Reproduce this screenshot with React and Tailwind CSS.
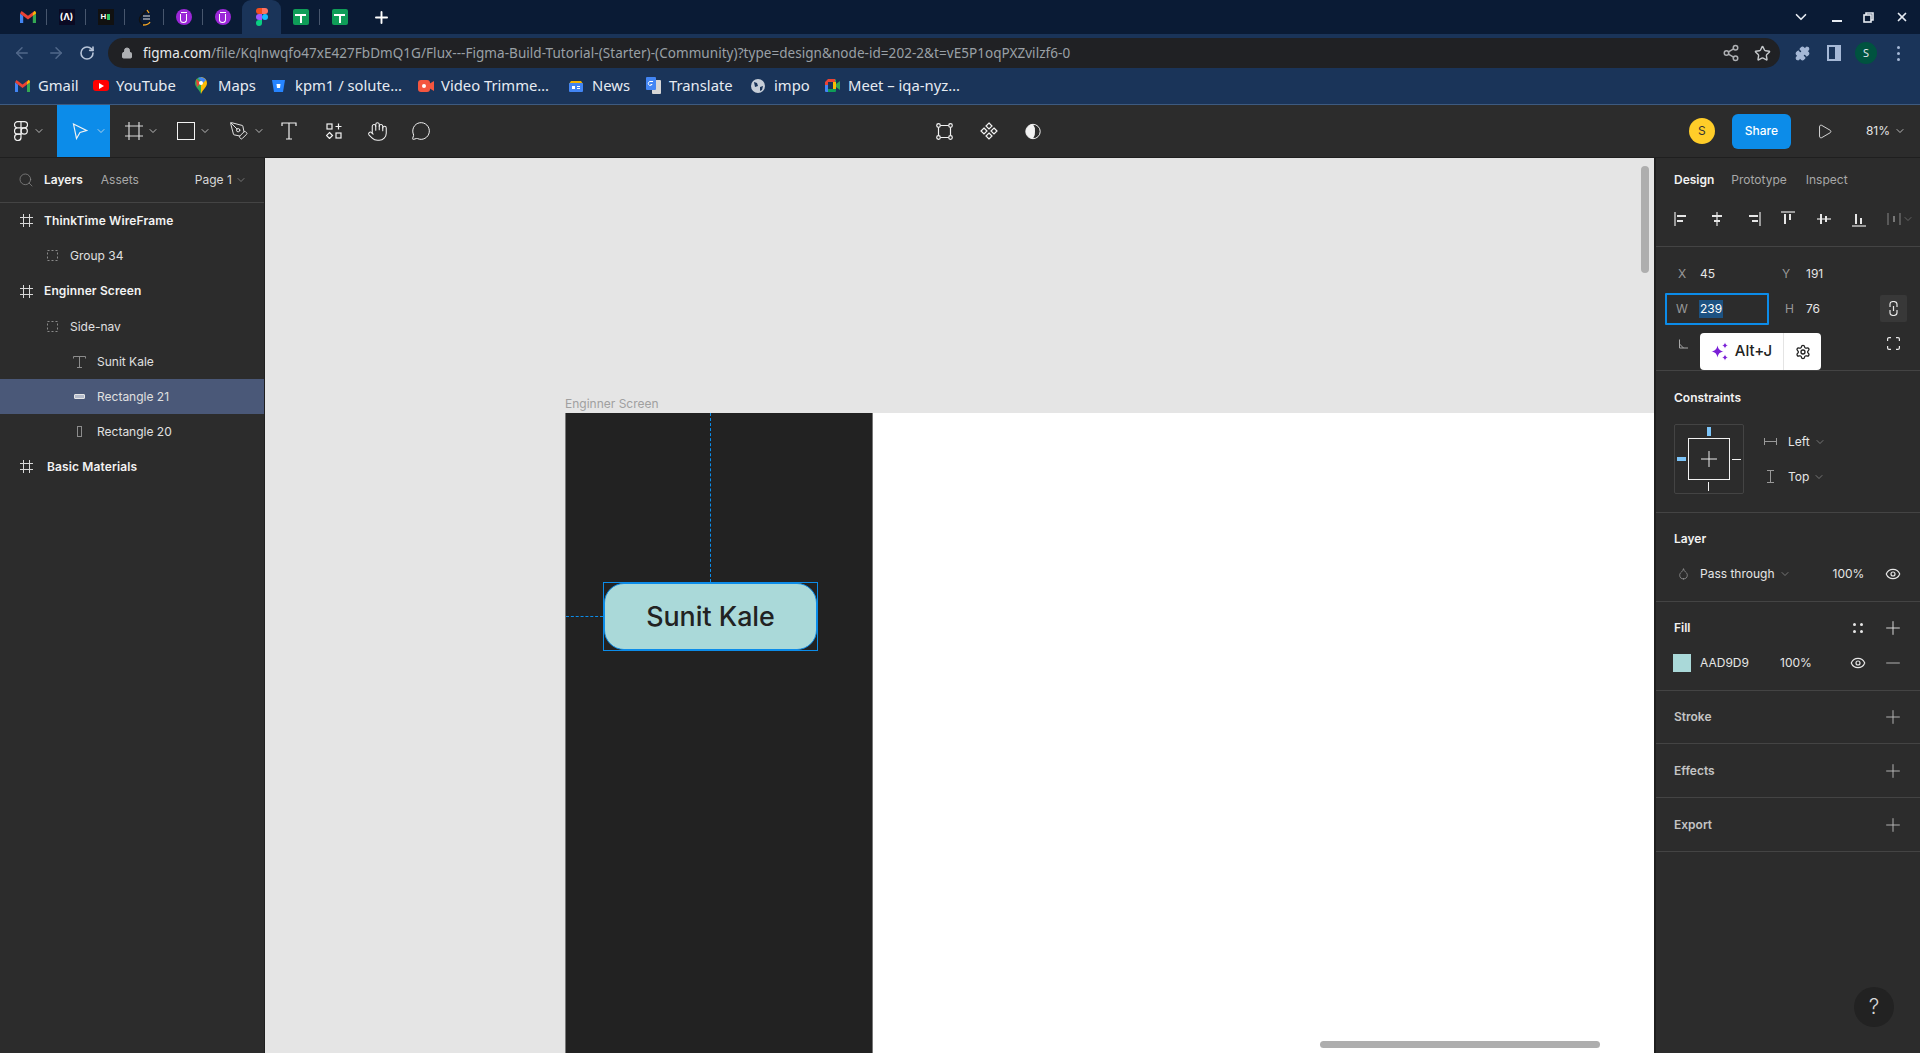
import {
  ArrowLeft,
  ArrowRight,
  RotateCw,
  Lock,
  Share2,
  Star,
  Puzzle,
  ChevronDown,
  Search,
  Eye,
  Plus,
  Minus,
  Hand,
  MessageCircle,
  PenTool,
  Settings,
  X,
  Play,
  Droplet,
} from "lucide-react";

const ui = "font-['Inter',sans-serif]";
const chrome = "font-['Noto_Sans',sans-serif]";

function Gmail({ size = 16 }) {
  return (
    <svg width={size} height={size * 0.8} viewBox="0 0 20 16">
      <path d="M0 3v13h4V6z" fill="#4285f4" />
      <path d="M20 3v13h-4V6z" fill="#34a853" />
      <path d="M0 3l10 7.5L20 3l-2-3-8 6-8-6z" fill="#ea4335" />
      <path d="M16 3l2-3c1 0 2 1 2 3l-4 3z" fill="#fbbc04" />
    </svg>
  );
}

function SheetIcon() {
  return (
    <div className="w-4 h-4 rounded-[2px] bg-[#0f9d58] flex flex-col items-center pt-[5px]">
      <div className="w-[11px] h-[2px] bg-white" />
      <div className="w-[2px] h-[7px] bg-white" />
    </div>
  );
}

function UIcon() {
  return (
    <div className="w-4 h-4 rounded-full bg-[#9b27d8] flex flex-col items-center justify-center">
      <div className="w-[6px] h-px bg-white" />
      <div className="w-[7px] h-[9px] border-x-[1.5px] border-b-[1.5px] border-white rounded-b-full mt-px" />
    </div>
  );
}

function FigmaColor() {
  return (
    <svg width="12" height="18" viewBox="0 0 12 18">
      <path d="M6 0H3a3 3 0 0 0 0 6h3z" fill="#f24e1e" />
      <path d="M6 0h3a3 3 0 0 1 0 6H6z" fill="#ff7262" />
      <path d="M6 6H3a3 3 0 0 0 0 6h3z" fill="#a259ff" />
      <circle cx="9" cy="9" r="3" fill="#1abcfe" />
      <path d="M3 12h3v3a3 3 0 1 1-3-3z" fill="#0acf83" />
    </svg>
  );
}

const tabIcons = [
  <Gmail key="g" />,
  <div key="a" className={`w-4 h-4 bg-[#0a0a23] text-white text-[9px] leading-4 text-center font-bold ${ui}`}>(Λ)</div>,
  <div key="h" className="w-4 h-4 bg-[#111] flex items-center justify-center gap-px">
    <span className="text-white text-[8px] leading-none font-bold font-['Liberation_Sans',sans-serif]">H</span>
    <div className="w-[3px] h-[6px] bg-[#2ec866]" />
  </div>,
  <svg key="s" width="14" height="17" viewBox="0 0 14 17" fill="none">
    <path d="M9 1L3 7c-2 2-2 5 0 7l2 2" stroke="#111" strokeWidth="1.5" />
    <path d="M5 7h7M5 10h7" stroke="#e8e8e8" strokeWidth="1.2" />
    <path d="M9 1l2 3M5 16c3 0 6-1 7-3" stroke="#f5a623" strokeWidth="1.3" />
  </svg>,
  <UIcon key="u1" />,
  <UIcon key="u2" />,
  <FigmaColor key="f" />,
  <SheetIcon key="s1" />,
  <SheetIcon key="s2" />,
];

const bookmarks = [
  { name: "Gmail", w: "w-[78px]", icon: <Gmail size={15} /> },
  {
    name: "YouTube",
    w: "w-[102px]",
    icon: (
      <div className="w-4 h-[11px] rounded-[3px] bg-[#f00] flex items-center justify-center">
        <div className="w-0 h-0 border-y-[3px] border-y-transparent border-l-[5px] border-l-white" />
      </div>
    ),
  },
  {
    name: "Maps",
    w: "w-[77px]",
    icon: (
      <svg width="12" height="17" viewBox="0 0 12 17">
        <path d="M6 0a6 6 0 0 0-6 6c0 4 4 6 6 11z" fill="#34a853" />
        <path d="M6 0a6 6 0 0 1 6 6c0 4-4 6-6 11z" fill="#fbbc04" />
        <path d="M1 2l5 4-4 4z" fill="#ea4335" />
        <path d="M3 1a6 6 0 0 1 8 2L8 6z" fill="#4285f4" />
        <circle cx="6" cy="6" r="2" fill="#fff" />
      </svg>
    ),
  },
  {
    name: "kpm1 / solute…",
    w: "w-[146px]",
    icon: (
      <svg width="13" height="13" viewBox="0 0 13 13">
        <path d="M0 1h13l-2 12H2z" fill="#2684ff" />
        <path d="M4.500 5h4L8 9H5z" fill="#fff" />
      </svg>
    ),
  },
  {
    name: "Video Trimme…",
    w: "w-[151px]",
    icon: (
      <svg width="16" height="12" viewBox="0 0 16 12">
        <rect width="12" height="12" rx="3" fill="#f4563f" />
        <path d="M11 4l5-3v10l-5-3z" fill="#f4563f" />
        <circle cx="6" cy="6" r="2" fill="#fff" />
      </svg>
    ),
  },
  {
    name: "News",
    w: "w-[77px]",
    icon: (
      <svg width="14" height="14" viewBox="0 0 14 14">
        <path d="M2 2h10l2 3H0z" fill="#f4b400" />
        <rect y="4" width="14" height="9" rx="1" fill="#4285f4" />
        <rect x="3" y="7" width="3" height="3" fill="#fff" />
        <rect x="8" y="7" width="3" height="1" fill="#fff" />
        <rect x="8" y="9" width="3" height="1" fill="#fff" />
      </svg>
    ),
  },
  {
    name: "Translate",
    w: "w-[105px]",
    icon: (
      <svg width="15" height="17" viewBox="0 0 15 17">
        <rect x="6" y="3" width="9" height="14" rx="1" fill="#d6d6d6" />
        <rect width="10" height="13" rx="1" fill="#4285f4" />
        <path d="M7 4.500H4a2 2 0 1 0 2 3H4.500" stroke="#fff" fill="none" />
      </svg>
    ),
  },
  {
    name: "impo",
    w: "w-[74px]",
    icon: (
      <svg width="14" height="14" viewBox="0 0 14 14">
        <circle cx="7" cy="7" r="7" fill="#c7ced8" />
        <path d="M3 3l3 1 1 3-3 1zM9 8l3-1-1 4-2 1z" fill="#1a3459" />
      </svg>
    ),
  },
  {
    name: "Meet – iqa-nyz…",
    w: "w-[135px]",
    icon: (
      <svg width="15" height="13" viewBox="0 0 15 13">
        <path d="M3 0h7v3H3v3H0V3z" fill="#ea4335" />
        <path d="M10 0l1 1v4l4-3v9l-4-3-3-2 2-3z" fill="#34a853" />
        <path d="M0 6h3v7H1a1 1 0 0 1-1-1z" fill="#4285f4" />
        <path d="M3 10h8v2a1 1 0 0 1-1 1H3z" fill="#0f9d58" />
        <rect x="8" y="3" width="3" height="7" fill="#fbbc04" />
      </svg>
    ),
  },
];

function ChromeBar() {
  return (
    <div className={`${chrome} shrink-0`}>
      <div className="h-[34px] bg-[#0a1b35] flex items-center pl-2 text-[#e6ebf2]">
        {tabIcons.map((icon, i) => (
          <div key={i} className="flex items-center">
            <div className={`w-[39px] h-[34px] flex items-center justify-center ${i === 6 ? "bg-[#1a3459] rounded-t-[9px]" : ""}`}>{icon}</div>
            {i !== 5 && i !== 6 && i !== 8 ? <div className="w-px h-[16px] bg-[#47566d] -ml-px" /> : null}
          </div>
        ))}
        <Plus size={19} strokeWidth={2.4} color="#fff" className="ml-[13px]" />
        <div className="flex-1" />
        <ChevronDown size={18} strokeWidth={2.2} color="#e6ebf2" className="mr-[22px]" />
        <div className="w-[10px] h-[2px] bg-[#e6ebf2] mt-[8px] mr-[21px]" />
        <svg width="11" height="11" viewBox="0 0 11 11" fill="none" stroke="#e6ebf2" strokeWidth="1.6" className="mr-[21px]">
          <path d="M3 3V1h7v7H8" />
          <rect x="1" y="3" width="7" height="7" />
        </svg>
        <X size={14} strokeWidth={3} color="#e6ebf2" className="mr-[11px]" />
      </div>
      <div className="h-[35px] pt-[3px] bg-[#1a3459] flex items-center">
        <div className="w-[108px] flex items-center pl-[13px] gap-[16px]">
          <ArrowLeft size={18} color="#51688a" />
          <ArrowRight size={18} color="#51688a" />
          <RotateCw size={16} color="#b7c4d8" strokeWidth={2.4} className="ml-[-2px]" />
        </div>
        <div className="w-[1672px] h-[30px] rounded-full bg-[#202124] flex items-center pl-[13px]">
          <Lock size={12} color="#aeb0b3" fill="#aeb0b3" />
          <div className="ml-[10px] text-[13.5px] tracking-[0.05px] text-[#9aa0a6] whitespace-nowrap">
            <span className="text-[#e8eaed]">figma.com</span>/file/Kqlnwqfo47xE427FbDmQ1G/Flux---Figma-Build-Tutorial-(Starter)-(Community)?type=design&amp;node-id=202-2&amp;t=vE5P1oqPXZvilzf6-0
          </div>
          <div className="flex-1" />
          <Share2 size={18} color="#aeb0b3" className="mr-[14px]" />
          <Star size={17} color="#c4c7ca" className="mr-[9px]" strokeWidth={2} />
        </div>
        <Puzzle size={15} color="#a5b8d6" fill="#a5b8d6" className="ml-[15px]" />
        <div className="ml-[17px] w-[14px] h-[16px] bg-[#a5b8d6] flex justify-start p-[2px]">
          <div className="w-[6px] h-full bg-[#1a3459]" />
        </div>
        <div className="ml-[14px] w-[22px] h-[22px] rounded-full bg-[#00533f] text-[#e0e6ee] text-[11px] flex items-center justify-center">S</div>
        <div className="ml-[20px] flex flex-col gap-[3px]">
          <div className="w-[3px] h-[3px] rounded-full bg-[#a5b8d6]" />
          <div className="w-[3px] h-[3px] rounded-full bg-[#a5b8d6]" />
          <div className="w-[3px] h-[3px] rounded-full bg-[#a5b8d6]" />
        </div>
      </div>
      <div className="h-[36px] pb-[2px] bg-[#1a3459] border-b border-[#3d5a80] flex items-center pl-[15px] text-[14.8px] text-[#e6ebf2]">
        {bookmarks.map((b) => (
          <div key={b.name} className={`${b.w} flex items-center`}>
            <div className="w-[23px] flex items-center">{b.icon}</div>
            <span className="whitespace-nowrap">{b.name}</span>
          </div>
        ))}
      </div>
    </div>
  );
}

const tool = { fill: "none", stroke: "#f2f2f2", strokeWidth: 1.2 };

function FigmaMark() {
  return (
    <svg width="14" height="20" viewBox="0 0 14 20" {...tool}>
      <path d="M7 .7H3.600a3.100 3.100 0 0 0 0 6.200H7zM7 .7h3.400a3.100 3.100 0 0 1 0 6.200H7zM7 6.900H3.600a3.100 3.100 0 0 0 0 6.200H7z" />
      <circle cx="10.200" cy="10" r="3.100" />
      <path d="M3.600 13.100H7v3.100a3.200 3.200 0 1 1-3.400-3.100z" />
    </svg>
  );
}

function Caret({ color = "#e6e6e6", className = "" }) {
  return <ChevronDown size={12} strokeWidth={1.5} color={color} className={className} />;
}

function Tool({ w, children, caret, active, pad = "", gap = "" }) {
  return (
    <div className={`${w} ${pad} h-[52px] flex items-center ${pad ? "" : "justify-center"} ${active ? "bg-[#0c8ce9]" : ""}`}>
      {children}
      {caret ? <Caret className={gap} /> : null}
    </div>
  );
}

function Toolbar() {
  return (
    <div className={`${ui} shrink-0 h-[53px] bg-[#2c2c2c] border-b border-[#1f1f1f] flex items-start`}>
      <Tool w="w-[57px]" pad="pl-[14px]" caret gap="ml-[5px]"><FigmaMark /></Tool>
      <Tool w="w-[53px]" pad="pl-[15px]" caret active gap="ml-[7px]">
        <svg width="16" height="17" viewBox="0 0 16 17" {...tool}><path d="M1.500 1L14.500 7.500 8 9.500 4.500 15.500z" /></svg>
      </Tool>
      <Tool w="w-[52px]" pad="pl-[15px]" caret gap="ml-[4px]">
        <svg width="18" height="18" viewBox="0 0 18 18" fill="none" stroke="#d8d8d8" strokeWidth="1.2">
          <path d="M4 0v18M14 0v18M0 4h18M0 14h18" />
        </svg>
      </Tool>
      <Tool w="w-[53px]" pad="pl-[15px]" caret gap="ml-[4px]">
        <div className="w-[18px] h-[18px] border border-[#f2f2f2]" />
      </Tool>
      <Tool w="w-[52px]" pad="pl-[14px]" caret gap="ml-[4px]">
        <PenTool size={20} strokeWidth={1.1} color="#f2f2f2" />
      </Tool>
      <Tool w="w-[44px]">
        <svg width="16" height="18" viewBox="0 0 16 18" {...tool}><path d="M1 4V1h14v3M8 1v16M5 17h6" /></svg>
      </Tool>
      <Tool w="w-[46px]">
        <svg width="16" height="16" viewBox="0 0 16 16" {...tool}>
          <rect x="1" y="1" width="5" height="5" />
          <path d="M12.500 0.500v6M9.500 3.500h6" />
          <path d="M3.500 9.500l3 3-3 3-3-3z" />
          <rect x="10" y="10" width="5" height="5" />
        </svg>
      </Tool>
      <Tool w="w-[40px]">
        <Hand size={21} strokeWidth={1.2} color="#f2f2f2" />
      </Tool>
      <Tool w="w-[47px]">
        <MessageCircle size={20} strokeWidth={1.2} color="#f2f2f2" />
      </Tool>
      <div className="w-[492px]" />
      <div className="flex items-center h-[52px] gap-[27px]">
        <svg width="17" height="17" viewBox="0 0 17 17" {...tool}>
          <path d="M2.500 4.500v8M14.500 4.500v8M4.500 2.500h8M4.500 14.500h8" />
          <circle cx="2.500" cy="2.500" r="1.800" />
          <circle cx="14.500" cy="2.500" r="1.800" />
          <circle cx="2.500" cy="14.500" r="1.800" />
          <circle cx="14.500" cy="14.500" r="1.800" />
        </svg>
        <svg width="18" height="18" viewBox="0 0 18 18" {...tool}>
          <path d="M9 1l3 3-3 3-3-3zM4 6l3 3-3 3-3-3zM14 6l3 3-3 3-3-3zM9 11l3 3-3 3-3-3z" />
        </svg>
        <svg width="16" height="17" viewBox="0 0 16 17">
          <circle cx="8" cy="8.500" r="7.200" fill="#2c2c2c" stroke="#f2f2f2" strokeWidth="1" />
          <path d="M8 1.300a7.200 7.200 0 0 0 0 14.400 10 10 0 0 0 2-7.200A10 10 0 0 0 8 1.300z" fill="#f2f2f2" />
        </svg>
      </div>
      <div className="flex-1" />
      <div className="flex items-center h-[52px] text-[12px] pl-[1px]">
        <div className="w-[26px] h-[26px] rounded-full bg-[#ffcd29] text-[#333] font-normal flex items-center justify-center">S</div>
        <div className="ml-[17px] w-[59px] h-[35px] rounded-[6px] bg-[#0c8ce9] text-white font-medium flex items-center justify-center">Share</div>
        <Play size={17} strokeWidth={1.2} color="#f2f2f2" className="ml-[25px]" />
        <span className="ml-[33px] text-[#e6e6e6]">81%</span>
        <Caret className="ml-[4px] mr-[14px]" />
      </div>
    </div>
  );
}

function LayerRow({ icon, label, bold, pad, selected, gap = "w-[26px]", h = "h-[35px]" }) {
  return (
    <div className={`${h} flex items-center ${pad} ${selected ? "bg-[#4a5878]" : ""} ${bold ? "font-semibold tracking-[0.01em] text-[#f2f2f2]" : "text-[#e0e0e0]"}`}>
      <div className={`${gap} flex items-center shrink-0`}>{icon}</div>
      <span>{label}</span>
    </div>
  );
}

const hash = (
  <svg width="13" height="13" viewBox="0 0 13 13" fill="none" stroke="#d8d8d8" strokeWidth="1">
    <path d="M3.500 0v13M9.500 0v13M0 3.500h13M0 9.500h13" />
  </svg>
);
const group = (
  <svg width="11" height="11" viewBox="0 0 11 11" fill="none" stroke="#8a8a8a" strokeWidth="1" strokeDasharray="2 2">
    <rect x=".5" y=".5" width="10" height="10" />
  </svg>
);

function LeftPanel() {
  return (
    <div className={`${ui} w-[265px] shrink-0 bg-[#2c2c2c] border-r border-[#1f1f1f] text-[12px]`}>
      <div className="h-[45px] border-b border-[#444] flex items-center">
        <Search size={16} strokeWidth={1.1} color="#8c8c8c" className="ml-[18px]" />
        <span className="ml-[10px] font-semibold text-[#f2f2f2]">Layers</span>
        <span className="ml-[18px] text-[#a8a8a8]">Assets</span>
        <span className="ml-[56px] text-[#d8d8d8]">Page 1</span>
        <Caret color="#8c8c8c" className="ml-[3px]" />
      </div>
      <LayerRow pad="pl-[20px]" gap="w-[24px]" bold icon={hash} label="ThinkTime WireFrame" />
      <LayerRow pad="pl-[47px]" icon={group} label="Group 34" gap="w-[23px]" />
      <LayerRow pad="pl-[20px]" gap="w-[24px]" bold icon={hash} label="Enginner Screen" h="h-[36px]" />
      <LayerRow pad="pl-[47px]" icon={group} label="Side-nav" gap="w-[23px]" />
      <LayerRow
        pad="pl-[73px]"
        icon={
          <svg width="13" height="12" viewBox="0 0 13 12" fill="none" stroke="#8c8c8c" strokeWidth="1">
            <path d="M.5 2.500V.5h12v2M6.500 .5v11M4 11.500h5" />
          </svg>
        }
        label="Sunit Kale"
        gap="w-[24px]"
      />
      <LayerRow
        pad="pl-[74px]"
        selected
        icon={<div className="w-[11px] h-[5px] border border-[#e6e6e6] bg-[#b5bccb] rounded-[1px]" />}
        label="Rectangle 21"
        gap="w-[23px]"
      />
      <LayerRow
        pad="pl-[77px]"
        icon={<div className="w-[5px] h-[11px] border border-[#8c8c8c]" />}
        label="Rectangle 20"
        gap="w-[20px]"
      />
      <LayerRow pad="pl-[20px]" gap="w-[27px]" bold icon={hash} label="Basic Materials" />
    </div>
  );
}

function Canvas() {
  return (
    <div className={`${ui} relative flex-1 bg-[#e5e5e5] overflow-hidden`}>
      <div className="absolute left-[300px] top-[238px] text-[12px] leading-[16px] text-[#a0a0a0]">Enginner Screen</div>
      <div className="absolute left-[300px] top-[255px] right-0 bottom-0 bg-white flex">
        <div className="relative w-[308px] h-full bg-[#222] border-x border-[#777]">
          <div className="absolute left-[144px] top-0 h-[169px] border-l border-dashed border-[#0c8ce9]" />
          <div className="absolute left-0 top-[203px] w-[37px] border-t border-dashed border-[#0c8ce9]" />
          <div className="absolute left-[37px] top-[169px] w-[215px] h-[69px] border border-[#0c8ce9]">
            <div className="w-full h-full rounded-[20px] border border-[#0c8ce9] bg-[#aad9d9] flex items-center justify-center text-[#222] text-[26.800px] font-medium">
              Sunit Kale
            </div>
          </div>
        </div>
      </div>
      <div className="absolute right-[5px] top-[8px] w-[8px] h-[107px] rounded-full bg-[#aeaeae]" />
      <div className="absolute left-[1055px] bottom-[5px] w-[280px] h-[7px] rounded-full bg-[#aeaeae]" />
    </div>
  );
}

// bar is the thin guide line, d the two thick blocks
function Align({ bar, d, muted }) {
  const color = muted ? "#777" : "#e6e6e6";
  return (
    <svg width="16" height="16" viewBox="0 0 16 16" fill="none" stroke={color}>
      <path d={bar} strokeWidth="1.2" />
      <path d={d} strokeWidth="2" />
    </svg>
  );
}

const aligns = [
  { bar: "M1 1v14", d: "M3 5h9M3 10h6" },
  { bar: "M8 1v14", d: "M3 5h10M5 10h6" },
  { bar: "M15 1v14", d: "M4 5h9M7 10h6" },
  { bar: "M1 1h14", d: "M5 3v10M10 3v6" },
  { bar: "M1 8h14", d: "M5 3v10M10 5v6" },
  { bar: "M1 15h14", d: "M5 3v10M10 7v6" },
];

function Title({ children, muted }) {
  return <span className={`font-semibold ${muted ? "text-[#c4c4c4]" : "text-[#f2f2f2]"}`}>{children}</span>;
}

function AddRow({ h, label }) {
  return (
    <div className={`${h} border-b border-[#444] flex items-center justify-between pl-[18px] pr-[16px]`}>
      <Title muted>{label}</Title>
      <Plus size={22} strokeWidth={1} color="#bdbdbd" />
    </div>
  );
}

function RightPanel() {
  return (
    <div className={`${ui} relative w-[266px] shrink-0 bg-[#2c2c2c] border-l-2 border-[#1f1f1f] text-[12px] text-[#e6e6e6]`}>
      <div className="h-[89px] border-b border-[#444]">
        <div className="h-[44px] flex items-center pl-[18px]">
          <Title>Design</Title>
          <span className="ml-[17px] text-[#a8a8a8]">Prototype</span>
          <span className="ml-[19px] text-[#a8a8a8]">Inspect</span>
        </div>
        <div className="h-[34px] flex items-center pl-[18px]">
          {aligns.map((a) => (
            <div key={a.bar} className="w-[35.400px]"><Align bar={a.bar} d={a.d} /></div>
          ))}
          <Align muted bar="M2 2v12M14 2v12" d="M8 5v6" />
          <Caret color="#777" />
        </div>
      </div>
      <div className="relative h-[124px] border-b border-[#444] pt-[9px]">
        <div className="h-[35px] flex items-center">
          <span className="w-[44px] pl-[22px] text-[#999]">X</span>
          <span className="w-[82px]">45</span>
          <span className="w-[24px] text-[#999]">Y</span>
          <span>191</span>
        </div>
        <div className="h-[35px] flex items-center">
          <div className="ml-[9px] w-[104px] h-[32px] border-2 border-[#0c8ce9] flex items-center rounded-[1px]">
            <span className="w-[32px] pl-[9px] text-[#999]">W</span>
            <span className="bg-[#1c5282] px-[1px] text-white">239</span>
          </div>
          <span className="ml-[16px] w-[21px] text-[#999]">H</span>
          <span>76</span>
          <div className="ml-auto mr-[13px] w-[27px] h-[27px] rounded-[2px] bg-[#383838] flex items-center justify-center">
            <svg width="9" height="15" viewBox="0 0 9 15" fill="none" stroke="#e6e6e6" strokeWidth="1.2">
              <path d="M1 6V3.500a3.500 3 0 0 1 7 0V6M1 9v2.500a3.500 3 0 0 0 7 0V9M4.500 5v5" />
            </svg>
          </div>
        </div>
        <div className="h-[35px] flex items-center justify-between">
          <svg className="ml-[23px]" width="10" height="10" viewBox="0 0 10 10" fill="none" stroke="#a8a8a8" strokeWidth="1">
            <path d="M.5 .5v8.500h8.500M.5 5l4 4" />
          </svg>
          <svg className="mr-[20px]" width="13" height="13" viewBox="0 0 13 13" fill="none" stroke="#e6e6e6" strokeWidth="1.2">
            <path d="M.6 4V2A1.400 1.400 0 0 1 2 .6h2M9 .6h2A1.400 1.400 0 0 1 12.400 2v2M12.400 9v2A1.400 1.400 0 0 1 11 12.400H9M4 12.400H2A1.400 1.400 0 0 1 .6 11V9" />
          </svg>
        </div>
        {/* shortcut popup sits over the row */}
        <div className="absolute left-[44px] top-[86px] w-[121px] h-[37px] bg-white rounded-[4px] flex items-center text-[#222] z-10">
          <div className="w-[84px] h-full flex items-center justify-center gap-[6px] border-r border-[#e4e4e4]">
            <svg width="18" height="19" viewBox="0 0 18 19" fill="#7a1fd6">
              <path d="M6.500 3.500c.8 3.800 2.200 5.200 6 6-3.800.8-5.200 2.200-6 6-.8-3.800-2.200-5.200-6-6 3.800-.8 5.200-2.200 6-6z" />
              <path d="M14 .5c.4 1.900 1.100 2.600 3 3-1.900.4-2.600 1.100-3 3-.4-1.900-1.100-2.600-3-3 1.900-.4 2.600-1.100 3-3z" />
              <path d="M14 12.500c.4 1.900 1.100 2.600 3 3-1.900.4-2.600 1.100-3 3-.4-1.900-1.100-2.600-3-3 1.900-.4 2.600-1.100 3-3z" />
            </svg>
            <span className="text-[15px] font-medium">Alt+J</span>
          </div>
          <div className="flex-1 flex items-center justify-center">
            <Settings size={16} strokeWidth={2} color="#222" />
          </div>
        </div>
      </div>
      <div className="h-[142px] border-b border-[#444] pl-[18px] pt-[18px]">
        <div className="h-[18px] flex items-center"><Title>Constraints</Title></div>
        <div className="flex mt-[17px]">
          <div className="relative w-[70px] h-[70px] border border-[#444] rounded-[2px] flex items-center justify-center">
            <div className="w-[42px] h-[42px] border border-[#f2f2f2] flex items-center justify-center">
              <Plus size={26} strokeWidth={0.9} color="#f2f2f2" />
            </div>
            <div className="absolute left-[32px] top-[2px] w-[4px] h-[9px] bg-[#7cc4f8]" />
            <div className="absolute left-[2px] top-[32px] w-[9px] h-[4px] bg-[#7cc4f8]" />
            <div className="absolute left-[33px] bottom-[2px] w-px h-[9px] bg-[#f2f2f2]" />
            <div className="absolute right-[2px] top-[34px] w-[9px] h-px bg-[#f2f2f2]" />
          </div>
          <div className="ml-[20px] flex flex-col">
            <div className="h-[35px] flex items-center">
              <svg width="13" height="7" viewBox="0 0 13 7" fill="none" stroke="#999" strokeWidth="1"><path d="M.5 0v7M12.500 0v7M.5 3.500h12" /></svg>
              <span className="ml-[11px]">Left</span>
              <Caret color="#8c8c8c" className="ml-[4px]" />
            </div>
            <div className="h-[35px] flex items-center">
              <svg className="ml-[3px] mr-[3px]" width="7" height="13" viewBox="0 0 7 13" fill="none" stroke="#999" strokeWidth="1"><path d="M0 .5h7M0 12.500h7M3.500 .5v12" /></svg>
              <span className="ml-[11px]">Top</span>
              <Caret color="#8c8c8c" className="ml-[4px]" />
            </div>
          </div>
        </div>
      </div>
      <div className="h-[89px] border-b border-[#444] pt-[17px]">
        <div className="h-[18px] pl-[18px] flex items-center"><Title>Layer</Title></div>
        <div className="h-[35px] mt-[8px] flex items-center pl-[21px]">
          <Droplet size={13} strokeWidth={1.2} color="#a8a8a8" />
          <span className="ml-[10px]">Pass through</span>
          <Caret color="#8c8c8c" className="ml-[4px]" />
          <span className="ml-[42px]">100%</span>
          <Eye size={16} strokeWidth={1.8} color="#e6e6e6" className="ml-[21px]" />
        </div>
      </div>
      <div className="h-[89px] border-b border-[#444] pt-[17px]">
        <div className="h-[18px] pl-[18px] pr-[16px] flex items-center justify-between">
          <Title>Fill</Title>
          <div className="flex items-center gap-[19px]">
            <div className="w-[10px] grid grid-cols-2 gap-[4px]">
              <div className="w-[3px] h-[3px] rounded-full bg-[#e6e6e6]" />
              <div className="w-[3px] h-[3px] rounded-full bg-[#e6e6e6]" />
              <div className="w-[3px] h-[3px] rounded-full bg-[#e6e6e6]" />
              <div className="w-[3px] h-[3px] rounded-full bg-[#e6e6e6]" />
            </div>
            <Plus size={22} strokeWidth={1} color="#e6e6e6" />
          </div>
        </div>
        <div className="h-[36px] mt-[8px] flex items-center pl-[17px] pr-[16px]">
          <div className="w-[18px] h-[18px] bg-[#aad9d9]" />
          <span className="ml-[9px] w-[80px]">AAD9D9</span>
          <span>100%</span>
          <Eye size={16} strokeWidth={1.8} color="#e6e6e6" className="ml-auto mr-[16px]" />
          <Minus size={22} strokeWidth={1} color="#bdbdbd" />
        </div>
      </div>
      <AddRow h="h-[53px]" label="Stroke" />
      <AddRow h="h-[54px]" label="Effects" />
      <AddRow h="h-[54px]" label="Export" />
      <div className="absolute left-[198px] bottom-[26px] w-[40px] h-[40px] rounded-full bg-[#222] text-[#d8d8d8] text-[21px] font-light flex items-center justify-center">?</div>
    </div>
  );
}

export default function App() {
  return (
    <div className="w-[1920px] h-[1053px] overflow-hidden flex flex-col bg-[#2c2c2c]">
      <ChromeBar />
      <Toolbar />
      <div className="flex flex-1 min-h-0">
        <LeftPanel />
        <Canvas />
        <RightPanel />
      </div>
    </div>
  );
}
